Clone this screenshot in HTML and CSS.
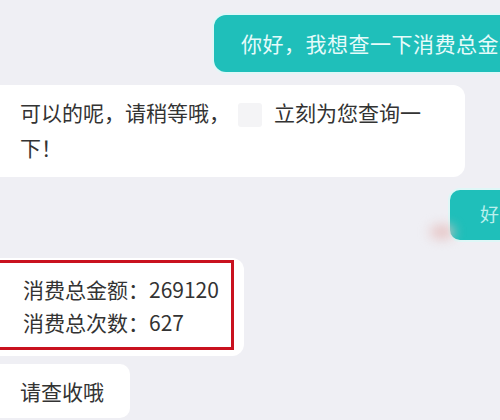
FILE: index.html
```html
<!DOCTYPE html>
<html lang="zh">
<head>
    <meta charset="UTF-8">
    <meta name="viewport" content="width=device-width, initial-scale=1.0">
    <title>聊天记录</title>
    <link rel="stylesheet" href="styles.css">
</head>
<body>
    <div class="chat">
        <div class="row right">
            <div class="bubble mine first">你好，我想查一下消费总金额</div>
        </div>
        <div class="row">
            <div class="bubble reply long">可以的呢，请稍等哦，<span class="blank"></span>立刻为您查询一<br>下！</div>
        </div>
        <div class="row right">
            <span class="smudge"></span>
            <div class="bubble mine short">好</div>
        </div>
        <div class="row">
            <div class="bubble reply result">
                <div class="mark">
                    消费总金额：269120<br>
                    消费总次数：627
                </div>
            </div>
        </div>
        <div class="row">
            <div class="bubble reply last">请查收哦</div>
        </div>
    </div>
</body>
</html>
```

FILE: styles.css
```css
body {
    margin: 0;
    background-color: #efeff4;
    font-family: "Noto Sans CJK SC", "Noto Sans", sans-serif;
    color: #333;
}
.chat {
    width: 500px;
    height: 420px;
    overflow: hidden;
    display: flex;
    flex-direction: column;
}
.row {
    display: flex;
    position: relative;
}
.row.right {
    justify-content: flex-end;
}
.bubble {
    font-size: 21px;
    white-space: nowrap;
    border-radius: 12px;
    box-sizing: border-box;
}
.mine {
    background: #1fbfba;
    color: #e6fbfa;
    box-shadow: 0 0 0 2px #dff7f7;
}
.mine.first {
    margin-top: 15px;
    height: 57px;
    line-height: 57px;
    width: 286px;
    padding-left: 27px;
    letter-spacing: 0.5px;
    overflow: hidden;
    border-radius: 12px 0 0 12px;
}
.mine.short {
    margin-top: 13px;
    width: 50px;
    height: 50px;
    line-height: 48px;
    padding-left: 30px;
    overflow: hidden;
    border-radius: 10px 0 0 10px;
    font-size: 19px;
    color: #b9efed;
}
.smudge {
    position: absolute;
    left: 430px;
    top: 48px;
    width: 24px;
    height: 14px;
    border-radius: 50%;
    background: #e6c4c4;
    filter: blur(6px);
}
.reply {
    background: #fff;
    border-radius: 0 12px 12px 0;
    padding-left: 20px;
}
.reply.long {
    margin-top: 13px;
    width: 465px;
    height: 92px;
    padding-top: 10px;
    line-height: 35px;
}
.blank {
    display: inline-block;
    width: 24px;
    height: 24px;
    margin: 0 12px 0 8px;
    vertical-align: middle;
    background: #f4f4f6;
    border-radius: 3px;
}
.reply.result {
    margin-top: 18px;
    width: 244px;
    padding: 2px 10px 6px 0;
}
.mark {
    border: 3px solid #c9111f;
    margin-left: -3px;
    padding: 10px 0 8px 23px;
    line-height: 33px;
}
.reply.last {
    margin-top: 8px;
    width: 130px;
    height: 54px;
    line-height: 54px;
    border-radius: 0 10px 10px 0;
}
```
